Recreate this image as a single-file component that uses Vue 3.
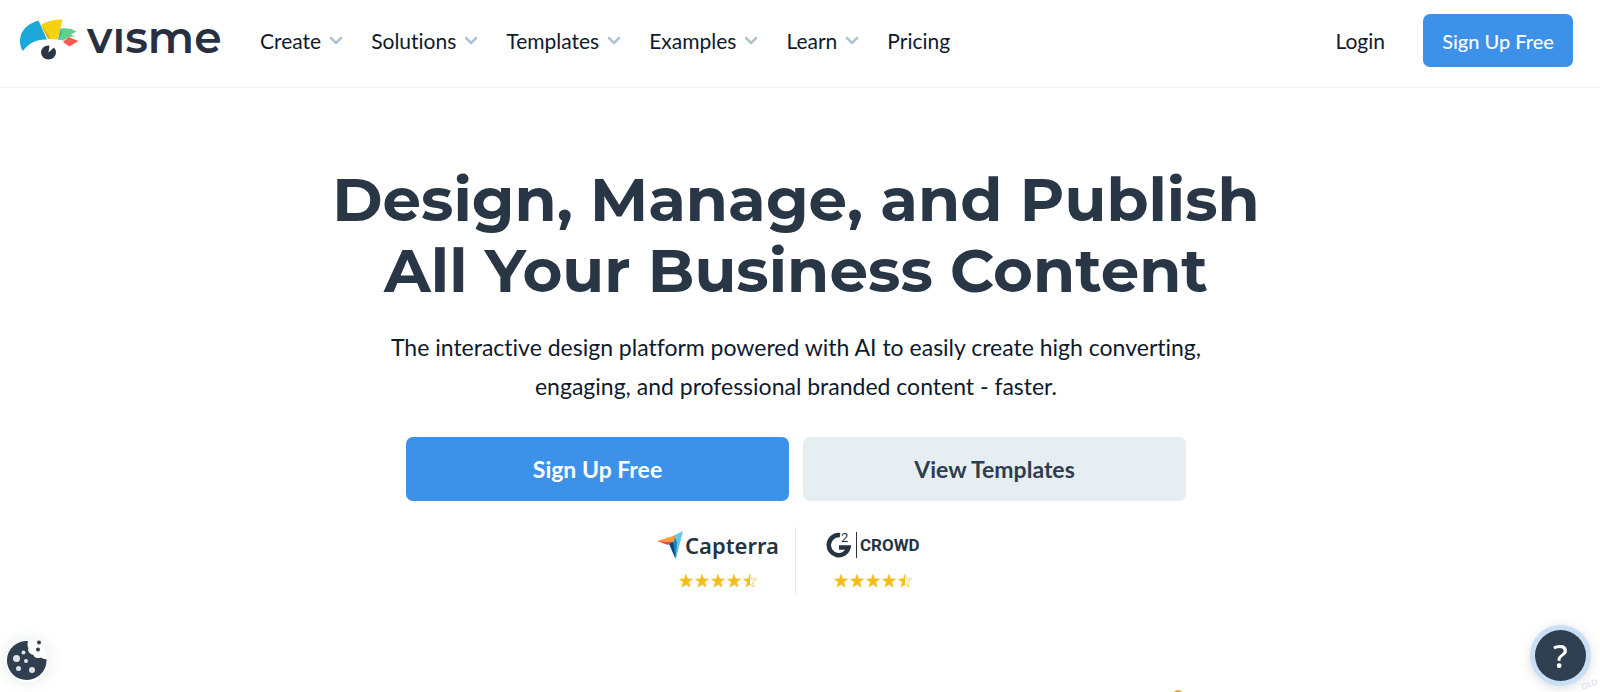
<template>
  <div class="page">
    <header class="topbar">
      <a class="logo" href="#" aria-label="Visme">
        <svg width="204" height="44" viewBox="0 0 204 44">
          <path fill="#1ba8d8" d="M19.5 1.5 28 20.5C18 20 9 24.5 4 32-1.500 24-1 7.5 19.5 1.5Z" />
          <path fill="#f5d10f" d="M22 6C28 2 36 .5 43.5.5L38.5 20.8C35 20 32 19.5 29 19.8Z" />
          <path fill="#d5b015" d="M22 6 31.5 19.6 29 19.8Z" />
          <path fill="#62cf93" d="M41.5 9.5C48 8.5 53 9.5 57.5 12.5L52 15.5 56 17.5 49.5 18 44.5 21.5 39 20.8Z" />
          <path fill="#4cb57c" d="M41.5 9.5 43.5 14 39 20.8Z" />
          <path fill="#fa5a50" d="M44 23 49.5 18 59.5 22 50.5 27.5Z" />
          <ellipse cx="29.5" cy="33.5" rx="7.5" ry="7" fill="#283645" />
          <path fill="#fff" d="M30.5 26 29.5 33.5 35.5 28Z" />
          <text class="logo-text" x="68" y="34">vısme</text>
        </svg>
      </a>
      <nav class="nav">
        <a v-for="item in menu" :key="item.label" class="nav-link" href="#">
          {{ item.label }}
          <svg v-if="item.children" width="14" height="10" viewBox="0 0 14 10" fill="none" stroke="#b0c4d0" stroke-width="2.5" stroke-linecap="round" stroke-linejoin="round">
            <path d="M2 2l5 5 5-5" />
          </svg>
        </a>
      </nav>
      <a class="login" href="#">Login</a>
      <button class="btn btn--small">Sign Up Free</button>
    </header>

    <main class="hero">
      <h1 class="hero-title">Design, Manage, and Publish<br>All Your Business Content</h1>
      <p class="hero-text">
        The interactive design platform powered with AI to easily create high converting,<br>
        engaging, and professional branded content - faster.
      </p>
      <div class="hero-actions">
        <button class="btn btn--large">Sign Up Free</button>
        <button class="btn btn--large btn--light">View Templates</button>
      </div>

      <div class="ratings">
        <div class="rating rating--left">
          <div class="rating-col">
            <div class="brand">
              <svg width="26" height="28" viewBox="0 0 26 28">
                <path fill="#68c5ed" d="M16 5 26 0 19 28Z" />
                <path fill="#044d80" d="M11 10.5 17.5 11 18.5 28Z" />
                <path fill="#1f7fb8" d="M17 5 20 11 18.5 28 16 11Z" />
                <path fill="#e54747" d="M0 10 16 10.5 11 14Z" />
                <path fill="#ff9d28" d="M0 10 18 4.5 17 11Z" />
              </svg>
              <span class="brand-capterra">Capterra</span>
            </div>
            <div class="stars">
              <svg v-for="n in 5" :key="n" width="14" height="14" viewBox="0 0 14 14">
                <path class="star-outline" :d="star" />
                <path class="star-fill" :d="n < 5 ? star : halfStar" />
              </svg>
            </div>
          </div>
        </div>
        <div class="rating rating--right">
          <div class="rating-col">
            <div class="brand">
              <svg width="32" height="28" viewBox="0 0 32 28">
                <path fill="none" stroke="#253443" stroke-width="4.5" d="M14 4.2A10 10 0 1 0 22.5 16.5H13" />
                <text class="brand-two" x="15" y="11">2</text>
                <path stroke="#253443" d="M30.5 1V27" />
              </svg>
              <span class="brand-crowd">CROWD</span>
            </div>
            <div class="stars">
              <svg v-for="n in 5" :key="n" width="14" height="14" viewBox="0 0 14 14">
                <path class="star-outline" :d="star" />
                <path class="star-fill" :d="n < 5 ? star : halfStar" />
              </svg>
            </div>
          </div>
        </div>
      </div>
    </main>

    <span class="accent-dot"></span>
    <span class="stamp">OLD</span>

    <button class="cookie" aria-label="Cookie settings">
      <svg width="42" height="42" viewBox="0 0 42 42">
        <path fill="#2f3f50" d="M22 1A19.8 19.5 0 1 0 40.5 19.5C37.5 19 36 18 34.5 17.5 31 19 28 17.5 27.5 15 23.5 14 21 11 22.5 8 21 6 21.5 3 22 1Z" />
        <circle cx="10.5" cy="18.5" r="3.5" fill="#dfe3e8" />
        <circle cx="17.5" cy="12.5" r="2" fill="#dfe3e8" />
        <circle cx="20" cy="21" r="2" fill="#dfe3e8" />
        <circle cx="12.5" cy="28.5" r="2.5" fill="#dfe3e8" />
        <circle cx="26" cy="30" r="3" fill="#dfe3e8" />
        <circle cx="33" cy="2.5" r="2" fill="#2f3f50" />
        <circle cx="32" cy="9.5" r="2" fill="#2f3f50" />
      </svg>
    </button>

    <button class="help" aria-label="Help">?</button>
  </div>
</template>

<script setup>
const menu = [
  { label: 'Create', children: true },
  { label: 'Solutions', children: true },
  { label: 'Templates', children: true },
  { label: 'Examples', children: true },
  { label: 'Learn', children: true },
  { label: 'Pricing', children: false }
]

const star = 'M7 .5 8.6 5H13.5L9.6 8 11 13 7 10.2 3 13 4.4 8 .5 5H5.4Z'
const halfStar = 'M7 .5V10.2L3 13 4.4 8 .5 5H5.4Z'
</script>

<style>
body {
  margin: 0;
  background: #fff;
}
</style>

<style scoped>
.page {
  position: relative;
  min-height: 100vh;
  overflow: hidden;
  font-family: Lato, "Liberation Sans", sans-serif;
  font-variant-ligatures: none;
  color: #0f1a2c;
}

a {
  color: inherit;
  text-decoration: none;
}

.topbar {
  display: flex;
  align-items: center;
  height: 81px;
  padding: 0 27px 6px 19px;
  border-bottom: 1px solid #eff4f9;
}

.logo {
  display: flex;
  margin-right: 37px;
}

.logo svg {
  overflow: visible;
}

.logo-text {
  font-family: Montserrat, Inter, sans-serif;
  font-size: 44px;
  font-weight: 600;
  fill: #283040;
}

.nav {
  display: flex;
  flex: 1;
  gap: 28px;
}

.nav-link {
  display: flex;
  align-items: center;
  gap: 8px;
}

.nav-link,
.login {
  font-size: 21px;
  line-height: 28px;
}

.login {
  margin-right: 38px;
}

.btn {
  border: none;
  border-radius: 7px;
  background: #3d91e8;
  color: #fff;
  font-family: inherit;
  font-variant-ligatures: none;
  cursor: pointer;
}

.btn--small {
  width: 150px;
  height: 53px;
  padding: 0;
  font-size: 20px;
  font-weight: 500;
}

.btn--large {
  flex: 1;
  height: 64px;
  font-size: 23px;
  font-weight: 700;
}

.btn--light {
  background: #e6eef2;
  color: #2e3d50;
}

.hero {
  display: flex;
  flex-direction: column;
  align-items: center;
  padding: 76px 8px 0 0;
}

.hero-title {
  margin: 0;
  font-family: Montserrat, Inter, sans-serif;
  font-size: 61px;
  font-weight: 700;
  line-height: 71px;
  text-align: center;
  color: #283645;
}

.hero-text {
  margin: 22px 0 0;
  font-size: 23px;
  line-height: 39px;
  text-align: center;
}

.hero-actions {
  display: flex;
  gap: 14px;
  width: 100%;
  max-width: 780px;
  margin-top: 31px;
}

.ratings {
  display: grid;
  grid-template-columns: 1fr 1fr;
  width: 100%;
  max-width: 780px;
  margin-top: 26px;
}

.rating {
  display: flex;
  height: 68px;
}

.rating--left {
  justify-content: flex-end;
  padding-right: 16px;
  border-right: 1px solid #e3eaf0;
}

.rating--right {
  padding-left: 30px;
}

.rating-col {
  display: flex;
  flex-direction: column;
  align-items: center;
  gap: 14px;
  padding-top: 3px;
}

.brand {
  display: flex;
  align-items: center;
  height: 30px;
  gap: 2px;
  color: #253443;
}

.brand-capterra {
  font-family: "Noto Sans", sans-serif;
  font-size: 22px;
  font-weight: 600;
  line-height: 30px;
}

.brand-crowd {
  font-family: "Liberation Sans Narrow", Roboto, sans-serif;
  font-size: 17px;
  font-weight: 700;
}

.brand-two {
  font-family: Roboto, sans-serif;
  font-size: 13px;
  fill: #253443;
}

.stars {
  display: flex;
  gap: 2px;
}

.star-outline {
  fill: none;
  stroke: #f7cf6e;
}

.star-fill {
  fill: #f5bd12;
}

.accent-dot {
  position: absolute;
  left: 1173px;
  bottom: -8px;
  width: 10px;
  height: 10px;
  border-radius: 50%;
  background: #f0a92c;
}

.stamp {
  position: absolute;
  right: 2px;
  bottom: 3px;
  font-size: 8px;
  line-height: 10px;
  font-weight: 700;
  color: #dfe3ec;
  transform: rotate(-20deg);
}

.cookie {
  position: fixed;
  left: 6px;
  bottom: 10px;
  padding: 0;
  border: none;
  border-radius: 50%;
  background: #fff;
  box-shadow: 0 0 16px rgba(40, 54, 69, 0.12);
  cursor: pointer;
}

.cookie svg {
  display: block;
}

.help {
  position: fixed;
  right: 14px;
  bottom: 11px;
  width: 51px;
  height: 51px;
  padding: 0;
  border: none;
  border-radius: 50%;
  background: #2f3f50;
  box-shadow: 0 0 0 5px #c9dff6, 0 2px 12px 4px rgba(40, 54, 69, 0.2);
  color: #fff;
  font-family: "Noto Sans", sans-serif;
  font-size: 33px;
  font-weight: 500;
  line-height: 51px;
  cursor: pointer;
}
</style>
